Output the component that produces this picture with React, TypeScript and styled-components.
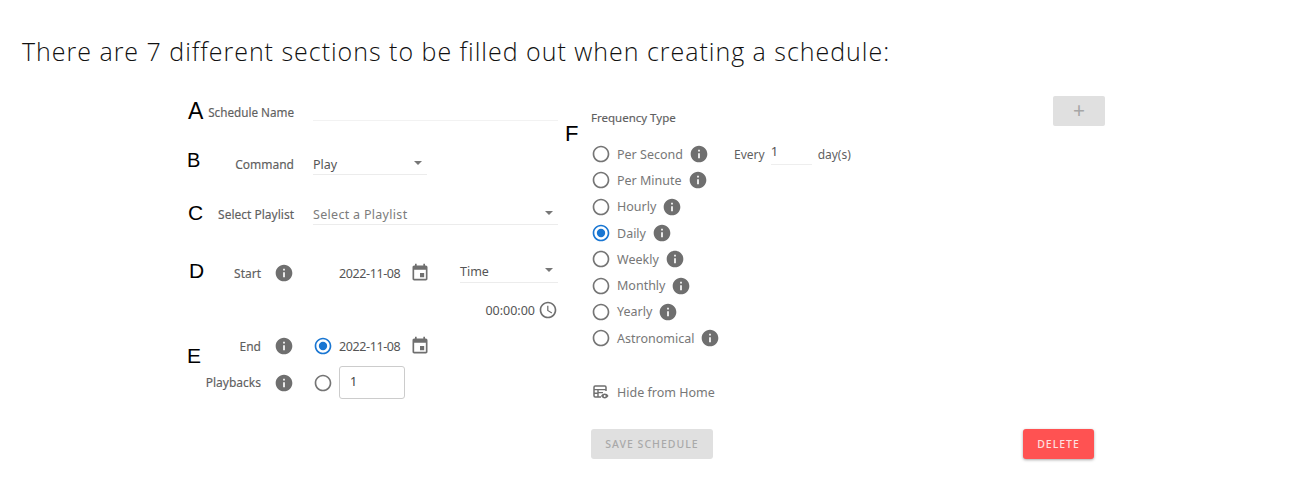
import React from 'react';
import styled, { createGlobalStyle } from 'styled-components';

const GlobalStyle = createGlobalStyle`
    html, body {
        margin: 0;
        padding: 0;
        background: #fff;
    }
    body {
        font-family: 'Noto Sans', 'Open Sans', sans-serif;
    }
`;

const infoPath =
    'M12 2C6.48 2 2 6.48 2 12s4.48 10 10 10 10-4.48 10-10S17.52 2 12 2zm1 15h-2v-6h2v6zm0-8h-2V7h2v2z';
const eventPath =
    'M17 12h-5v5h5v-5zM16 1v2H8V1H6v2H5c-1.11 0-1.99.9-1.99 2L3 19c0 1.1.89 2 2 2h14c1.1 0 2-.9 2-2V5c0-1.1-.9-2-2-2h-1V1h-2zm3 18H5V8h14v11z';
const clockPath =
    'M11.99 2C6.47 2 2 6.48 2 12s4.47 10 9.99 10C17.52 22 22 17.52 22 12S17.52 2 11.99 2zM12 20c-4.42 0-8-3.58-8-8s3.58-8 8-8 8 3.58 8 8-3.58 8-8 8zm.5-13H11v6l5.25 3.15.75-1.23-4.5-2.67z';

const Icon = ({ d, className }: { d: string; className?: string }) => (
    <svg className={className} viewBox="0 0 24 24" fill="currentColor">
        <path d={d} />
    </svg>
);

const Info = styled(Icon).attrs({ d: infoPath })`
    width: 20px;
    height: 20px;
    flex: none;
    color: #6f6f6f;
`;

const Calendar = styled(Icon).attrs({ d: eventPath })`
    width: 20px;
    height: 20px;
    flex: none;
    color: #6f6f6f;
    margin-left: 9px;
`;

const Clock = styled(Icon).attrs({ d: clockPath })`
    width: 20px;
    height: 20px;
    flex: none;
    color: #6f6f6f;
    margin-left: 3px;
`;

const Radio = ({ checked }: { checked?: boolean }) => (
    <RadioSvg viewBox="0 0 24 24" fill="currentColor" $checked={checked}>
        <path d="M12 2C6.48 2 2 6.48 2 12s4.48 10 10 10 10-4.48 10-10S17.52 2 12 2zm0 18c-4.42 0-8-3.58-8-8s3.58-8 8-8 8 3.58 8 8-3.58 8-8 8z" />
        {checked && <circle cx="12" cy="12" r="5" />}
    </RadioSvg>
);

const Caret = () => (
    <CaretSvg viewBox="0 0 10 5">
        <path d="M0 0l5 5 5-5z" fill="currentColor" />
    </CaretSvg>
);

const HideIcon = () => (
    <HideSvg viewBox="0 0 16 14" fill="none" stroke="currentColor">
        <path d="M8 12H2.2c-.7 0-1.2-.5-1.2-1.2V2.2C1 1.5 1.5 1 2.2 1h9.6c.7 0 1.2.5 1.2 1.2V6" strokeWidth="1.5" />
        <path d="M1 4.6h12M5 4.6V12M1 8.2h4M5 7.6h5" strokeWidth="1.4" />
        <path d="M8 11c1-1.7 2.2-2.4 3.7-2.4s2.8.7 3.8 2.4c-1 1.7-2.3 2.4-3.8 2.4S9 12.7 8 11z" fill="currentColor" stroke="none" />
        <circle cx="11.7" cy="11" r="1" fill="#fff" stroke="none" />
    </HideSvg>
);

const frequencies = [
    { label: 'Per Second' },
    { label: 'Per Minute' },
    { label: 'Hourly' },
    { label: 'Daily', checked: true },
    { label: 'Weekly' },
    { label: 'Monthly' },
    { label: 'Yearly' },
    { label: 'Astronomical' },
];

const marks = [
    { text: 'A', x: 188, y: 100, size: 23 },
    { text: 'B', x: 187, y: 149, size: 20 },
    { text: 'C', x: 188, y: 201, size: 21 },
    { text: 'D', x: 189, y: 259, size: 21 },
    { text: 'E', x: 187, y: 344, size: 21 },
    { text: 'F', x: 565, y: 122, size: 22 },
];

export default function App() {
    return (
        <Page>
            <GlobalStyle />
            <Heading>There are 7 different sections to be filled out when creating a schedule:</Heading>
            <Form>
                <LeftColumn>
                    <NameRow>
                        <NameLabel>Schedule Name</NameLabel>
                        <Underlined />
                    </NameRow>
                    <CommandRow>
                        <FieldLabel>Command</FieldLabel>
                        <Select $width={114}>
                            Play
                            <Caret />
                        </Select>
                    </CommandRow>
                    <PlaylistRow>
                        <FieldLabel>Select Playlist</FieldLabel>
                        <Select $muted>
                            Select a Playlist
                            <Caret />
                        </Select>
                    </PlaylistRow>
                    <DateRow $top={36}>
                        <DateLabel>Start</DateLabel>
                        <Info />
                        <RadioSlot />
                        <DateValue>2022-11-08</DateValue>
                        <Calendar />
                        <TimeSelect>
                            Time
                            <Caret />
                        </TimeSelect>
                    </DateRow>
                    <ClockRow>
                        00:00:00
                        <Clock />
                    </ClockRow>
                    <DateRow $top={12}>
                        <DateLabel>End</DateLabel>
                        <Info />
                        <RadioSlot>
                            <Radio checked />
                        </RadioSlot>
                        <DateValue>2022-11-08</DateValue>
                        <Calendar />
                    </DateRow>
                    <PlaybackRow>
                        <DateLabel>Playbacks</DateLabel>
                        <Info />
                        <RadioSlot>
                            <Radio />
                        </RadioSlot>
                        <NumberBox>1</NumberBox>
                    </PlaybackRow>
                </LeftColumn>
                <RightColumn>
                    <TopRow>
                        <FrequencyTitle>Frequency Type</FrequencyTitle>
                        <AddButton>+</AddButton>
                    </TopRow>
                    <FrequencyArea>
                        <RadioList>
                            {frequencies.map((f) => (
                                <RadioItem key={f.label}>
                                    <Radio checked={f.checked} />
                                    <RadioText>{f.label}</RadioText>
                                    <Info />
                                </RadioItem>
                            ))}
                        </RadioList>
                        <Every>
                            Every
                            <EveryInput>1</EveryInput>
                            day(s)
                        </Every>
                    </FrequencyArea>
                    <HideRow>
                        <HideIcon />
                        <RadioText>Hide from Home</RadioText>
                    </HideRow>
                    <Footer>
                        <SaveButton>SAVE SCHEDULE</SaveButton>
                        <DeleteButton>DELETE</DeleteButton>
                    </Footer>
                </RightColumn>
                {marks.map((m) => (
                    <Mark key={m.text} $x={m.x} $y={m.y} $size={m.size}>
                        {m.text}
                    </Mark>
                ))}
            </Form>
        </Page>
    );
}

const Page = styled.div`
    position: relative;
    width: 1313px;
    height: 481px;
    overflow: hidden;
    padding-top: 33px;
    box-sizing: border-box;
`;

const Heading = styled.h1`
    margin: 0 0 0 22px;
    font-family: 'Open Sans', sans-serif;
    font-weight: 300;
    font-size: 25px;
    letter-spacing: 0.98px;
    line-height: 36px;
    color: #111;
    white-space: nowrap;
`;

const Form = styled.div`
    display: flex;
    gap: 33px;
    margin: 27px 0 0 187px;
    width: 918px;
`;

const Mark = styled.span<{ $x: number; $y: number; $size: number }>`
    position: absolute;
    left: ${(p) => p.$x}px;
    top: ${(p) => p.$y}px;
    font-family: 'Liberation Sans', Arial, sans-serif;
    font-size: ${(p) => p.$size}px;
    line-height: 23px;
    color: #000;
`;

const LeftColumn = styled.div`
    width: 371px;
    flex: none;
    display: flex;
    flex-direction: column;
`;

const NameRow = styled.div`
    display: grid;
    grid-template-columns: 107px 245px;
    column-gap: 19px;
    height: 25px;
    align-items: center;
`;

const CommandRow = styled(NameRow)`
    margin-top: 28px;
    height: 26px;
`;

const PlaylistRow = styled(NameRow)`
    margin-top: 24px;
    height: 26px;
`;

const FieldLabel = styled.label`
    font-size: 12px;
    color: #5f5f5f;
    text-align: right;
    white-space: nowrap;
    margin-top: 4px;
    -webkit-text-stroke: 0.15px #5f5f5f;
`;

const NameLabel = styled(FieldLabel)`
    margin-top: 6px;
    font-size: 11.7px;
`;

const Underlined = styled.div`
    height: 25px;
    box-sizing: border-box;
    border-bottom: 1px solid #f2f2f2;
`;

const Select = styled.div<{ $width?: number; $muted?: boolean }>`
    display: flex;
    align-items: center;
    justify-content: space-between;
    height: 26px;
    box-sizing: border-box;
    width: ${(p) => (p.$width ? `${p.$width}px` : '100%')};
    padding: 5px 5px 0 0;
    border-bottom: 1px solid #ececec;
    font-size: 12.5px;
    letter-spacing: ${(p) => (p.$muted ? '0.3px' : '0')};
    color: ${(p) => (p.$muted ? '#7c7c7c' : '#555')};
`;

const CaretSvg = styled.svg`
    width: 8px;
    height: 4px;
    color: #777;
    margin-bottom: 3px;
`;

const DateRow = styled.div<{ $top: number }>`
    display: flex;
    align-items: center;
    height: 24px;
    margin-top: ${(p) => p.$top}px;
`;

const DateLabel = styled.span`
    width: 74px;
    margin-right: 13px;
    flex: none;
    text-align: right;
    font-size: 12px;
    color: #5f5f5f;
    -webkit-text-stroke: 0.15px #5f5f5f;
`;

const RadioSlot = styled.span`
    width: 20px;
    height: 20px;
    margin: 0 6px 0 19px;
    flex: none;
`;

const RadioSvg = styled.svg<{ $checked?: boolean }>`
    width: 20px;
    height: 20px;
    flex: none;
    display: block;
    color: ${(p) => (p.$checked ? '#1976d2' : '#757575')};
`;

const DateValue = styled.span`
    font-size: 12.5px;
    letter-spacing: -0.4px;
    color: #555;
    width: 62px;
    white-space: nowrap;
`;

const TimeSelect = styled(Select)`
    width: 98px;
    margin-left: 30px;
    margin-top: -7px;
`;

const ClockRow = styled.div`
    display: flex;
    align-items: center;
    justify-content: flex-end;
    height: 24px;
    margin-top: 13px;
    font-size: 12.5px;
    color: #555;
`;

const PlaybackRow = styled(DateRow).attrs({ $top: 0 })`
    height: 33px;
    margin-top: 8px;
`;

const NumberBox = styled.div`
    width: 66px;
    height: 33px;
    box-sizing: border-box;
    padding-left: 10px;
    line-height: 29px;
    border: 1px solid #ccc;
    border-radius: 3px;
    font-size: 12.5px;
    color: #444;
`;

const RightColumn = styled.div`
    flex: 1;
    display: flex;
    flex-direction: column;
`;

const TopRow = styled.div`
    display: flex;
    justify-content: space-between;
    align-items: flex-start;
    height: 30px;
`;

const FrequencyTitle = styled.span`
    font-size: 11.5px;
    color: #5f5f5f;
    margin-top: 14px;
    -webkit-text-stroke: 0.15px #5f5f5f;
`;

const AddButton = styled.div`
    width: 52px;
    height: 30px;
    border-radius: 2px;
    background: #e0e0e0;
    color: #a6a6a6;
    font-size: 21px;
    line-height: 28px;
    text-align: center;
`;

const FrequencyArea = styled.div`
    display: flex;
    align-items: flex-start;
    margin-top: 15px;
`;

const RadioList = styled.div`
    width: 143px;
    flex: none;
    display: flex;
    flex-direction: column;
`;

const RadioItem = styled.div`
    display: flex;
    align-items: center;
    height: 26.3px;
    white-space: nowrap;
`;

const RadioText = styled.span`
    font-size: 12.5px;
    color: #777;
    margin: 0 6px 0 6px;
`;

const Every = styled.div`
    display: flex;
    align-items: center;
    height: 26px;
    font-size: 12px;
    color: #5f5f5f;
`;

const EveryInput = styled.div`
    width: 41px;
    height: 24px;
    margin: -3px 6px 0;
    box-sizing: border-box;
    border-bottom: 1px solid #eee;
    font-size: 13px;
    line-height: 20px;
    color: #555;
`;

const HideRow = styled.div`
    display: flex;
    align-items: center;
    height: 24px;
    margin-top: 29px;
`;

const HideSvg = styled.svg`
    width: 16px;
    height: 14px;
    margin: 0 2px 0 2px;
    color: #6f6f6f;
`;

const Footer = styled.div`
    display: flex;
    justify-content: space-between;
    padding-right: 11px;
    margin-top: 25px;
`;

const SaveButton = styled.div`
    width: 122px;
    height: 30px;
    border-radius: 3px;
    background: #e0e0e0;
    color: #a9a9a9;
    font-size: 10.5px;
    font-weight: 500;
    letter-spacing: 1px;
    line-height: 30px;
    text-align: center;
`;

const DeleteButton = styled.div`
    width: 71px;
    height: 30px;
    border-radius: 3px;
    background: #ff5252;
    color: #fde0e0;
    font-size: 10.5px;
    font-weight: 500;
    letter-spacing: 1px;
    line-height: 30px;
    text-align: center;
    box-shadow: 0 1px 3px rgba(0, 0, 0, 0.35);
`;
